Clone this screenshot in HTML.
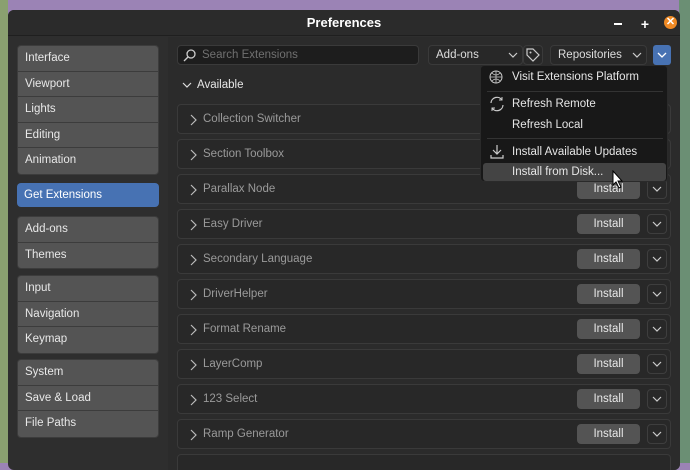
<!DOCTYPE html>
<html><head><style>
*{box-sizing:border-box;margin:0;padding:0}
body{width:690px;height:463px;overflow:hidden;background:#9b83b5;font-family:"Liberation Sans",sans-serif;font-size:11.5px;color:#e6e6e6;position:relative}
.bgg{position:absolute;left:0;top:0;width:8px;height:463px;background:#8aa070}
.bgr{position:absolute;right:0;top:0;width:11px;height:463px;background:#6b8f74}
.win{position:absolute;left:8px;top:10px;width:672px;height:460px;background:#2e2e2e;border-radius:6px;overflow:hidden}
.title{height:26px;background:#2b2b2b;border-bottom:1px solid #1f1f1f;text-align:center;line-height:26px;font-size:13px;font-weight:bold;color:#fff}
.side{position:absolute;left:9px;width:142px;background:#545454;border-radius:4px;border:1px solid #3c3c3c}
.side div{height:25.6px;line-height:25px;padding-left:7px;border-bottom:1px solid #3c3c3c;color:#e8e8e8}
.side div:last-child{border-bottom:none}
.sel{position:absolute;left:9px;top:173px;width:142px;height:24px;background:#4772b3;border-radius:4px;line-height:24px;padding-left:7px;color:#fff}
.main{position:absolute;left:160px;top:27px;width:512px;height:440px;background:#2b2b2b}
.abs{position:absolute}
.field{position:absolute;background:#1d1d1d;border:1px solid #3a3a3a;border-radius:4px;height:20px;line-height:18px}
.row{position:absolute;left:9px;width:494px;height:30px;border:1px solid #3a3a3a;border-radius:4px;background:#282828}
.row .n{position:absolute;left:25px;top:8px;color:#9a9a9a}
.row .c{position:absolute;left:11px;top:9px}
.ib{position:absolute;left:399px;top:4px;width:63px;height:20px;background:#545454;border-radius:4px;text-align:center;line-height:20px;color:#e8e8e8}
.db{position:absolute;left:469px;top:4px;width:20px;height:20px;border:1px solid #3e3e3e;border-radius:4px;background:#282828}
.menu{position:absolute;left:480px;top:65px;width:188px;height:117px;background:#181818;border-radius:4px;border:1px solid #2a2a2a}
.mi{position:absolute;left:31px;color:#e6e6e6}
.sep{position:absolute;left:6px;width:176px;height:1px;background:#333}
</style></head><body>
<div class="bgg"></div><div class="bgr"></div>
<svg width="0" height="0" style="position:absolute"><defs>
<symbol id="r" viewBox="0 0 8 12"><path d="M2 1l5 5-5 5" fill="none" stroke="#bbb" stroke-width="1.2"/></symbol>
<symbol id="d" viewBox="0 0 18 18"><path d="M5 7l4 4 4-4" fill="none" stroke="#ccc" stroke-width="1.2"/></symbol>
</defs></svg>
<div class="win">
<div class="title">Preferences</div>
<div class="abs" style="right:58px;top:13px;width:8px;height:2px;background:#fff"></div>
<div class="abs" style="right:31px;top:6px;color:#fff;font-weight:bold;font-size:14px">+</div>
<div class="abs" style="right:3px;top:6px;width:13px;height:13px;border-radius:50%;background:#f08a24;color:#fff;font-size:11px;line-height:13px;text-align:center;font-weight:bold">✕</div>
<div class="side" style="top:35px"><div>Interface</div><div>Viewport</div><div>Lights</div><div>Editing</div><div>Animation</div></div>
<div class="sel">Get Extensions</div>
<div class="side" style="top:206px"><div>Add-ons</div><div>Themes</div></div>
<div class="side" style="top:265px"><div>Input</div><div>Navigation</div><div>Keymap</div></div>
<div class="side" style="top:349px"><div>System</div><div>Save &amp; Load</div><div>File Paths</div></div>
<div class="main">
<div class="field" style="left:9px;top:8px;width:242px;color:#707070;padding-left:24px">Search Extensions
<svg class="abs" style="left:5px;top:3px" width="13" height="13" viewBox="0 0 13 13"><circle cx="8" cy="5" r="4" fill="none" stroke="#ccc" stroke-width="1.3"/><path d="M5 8L1 12" stroke="#ccc" stroke-width="1.3"/></svg></div>
<div class="field" style="left:260px;top:8px;width:95px;padding-left:7px;color:#ddd;background:#282828">Add-ons<svg class="abs" style="right:0;top:0" width="18" height="18"><use href="#d"/></svg></div>
<div class="field" style="left:355px;top:8px;width:20px;background:#282828"><svg width="18" height="18" viewBox="0 0 18 18"><path d="M3 3h6l6 6-6 6-6-6z" fill="none" stroke="#ccc" stroke-width="1.2"/><circle cx="6.5" cy="6.5" r="1" fill="#ccc"/></svg></div>
<div class="field" style="left:382px;top:8px;width:97px;padding-left:7px;color:#ddd;background:#282828">Repositories<svg class="abs" style="right:0;top:0" width="18" height="18"><use href="#d"/></svg></div>
<div class="abs" style="left:485px;top:8px;width:18px;height:20px;background:#4772b3;border-radius:3px"><svg width="18" height="20"><path d="M5 8l4 4 4-4" fill="none" stroke="#fff" stroke-width="1.3"/></svg></div>
<svg class="abs" style="left:14px;top:44px" width="10" height="8"><path d="M1 2l4 4 4-4" fill="none" stroke="#ddd" stroke-width="1.2"/></svg>
<div class="abs" style="left:29px;top:42px;color:#e6e6e6">Available</div>
</div>
<div class="main" style="background:none;top:0">
<div class="row" style="top:94px"><svg class="c" width="8" height="12"><use href="#r"/></svg><span class="n">Collection Switcher</span></div>
<div class="row" style="top:129px"><svg class="c" width="8" height="12"><use href="#r"/></svg><span class="n">Section Toolbox</span></div>
<div class="row" style="top:164px"><svg class="c" width="8" height="12"><use href="#r"/></svg><span class="n">Parallax Node</span><div class="ib">Install</div><div class="db"><svg width="18" height="18"><use href="#d"/></svg></div></div>
<div class="row" style="top:199px"><svg class="c" width="8" height="12"><use href="#r"/></svg><span class="n">Easy Driver</span><div class="ib">Install</div><div class="db"><svg width="18" height="18"><use href="#d"/></svg></div></div>
<div class="row" style="top:234px"><svg class="c" width="8" height="12"><use href="#r"/></svg><span class="n">Secondary Language</span><div class="ib">Install</div><div class="db"><svg width="18" height="18"><use href="#d"/></svg></div></div>
<div class="row" style="top:269px"><svg class="c" width="8" height="12"><use href="#r"/></svg><span class="n">DriverHelper</span><div class="ib">Install</div><div class="db"><svg width="18" height="18"><use href="#d"/></svg></div></div>
<div class="row" style="top:304px"><svg class="c" width="8" height="12"><use href="#r"/></svg><span class="n">Format Rename</span><div class="ib">Install</div><div class="db"><svg width="18" height="18"><use href="#d"/></svg></div></div>
<div class="row" style="top:339px"><svg class="c" width="8" height="12"><use href="#r"/></svg><span class="n">LayerComp</span><div class="ib">Install</div><div class="db"><svg width="18" height="18"><use href="#d"/></svg></div></div>
<div class="row" style="top:374px"><svg class="c" width="8" height="12"><use href="#r"/></svg><span class="n">123 Select</span><div class="ib">Install</div><div class="db"><svg width="18" height="18"><use href="#d"/></svg></div></div>
<div class="row" style="top:409px"><svg class="c" width="8" height="12"><use href="#r"/></svg><span class="n">Ramp Generator</span><div class="ib">Install</div><div class="db"><svg width="18" height="18"><use href="#d"/></svg></div></div>
<div class="row" style="top:444px"></div>
</div>
</div>
<div class="menu">
<div class="sep" style="top:25px"></div><div class="sep" style="top:72px"></div>
<div class="abs" style="left:2px;top:97px;width:183px;height:18px;background:#444;border-radius:3px"></div>
<svg class="abs" style="left:8px;top:4px" width="16" height="16"><circle cx="7" cy="7" r="6" fill="none" stroke="#ccc"/><path d="M1 7h12M7 1v12M3 3q4 4 8 0M3 11q4-4 8 0" fill="none" stroke="#ccc" stroke-width=".8"/></svg>
<svg class="abs" style="left:8px;top:30px" width="16" height="16"><path d="M2 7a6 6 0 0 1 11-3M14 9a6 6 0 0 1-11 3" fill="none" stroke="#ccc" stroke-width="1.2"/><path d="M13 1v3h-3M3 15v-3h3" fill="none" stroke="#ccc"/></svg>
<svg class="abs" style="left:8px;top:78px" width="16" height="16"><path d="M8 1v9M4 6l4 4 4-4M2 11v3h12v-3" fill="none" stroke="#ccc" stroke-width="1.2"/></svg>
<div class="mi" style="top:5px">Visit Extensions Platform</div>
<div class="mi" style="top:32px">Refresh Remote</div>
<div class="mi" style="top:53px">Refresh Local</div>
<div class="mi" style="top:80px">Install Available Updates</div>
<div class="mi" style="top:100px">Install from Disk...</div>
</div>
<svg class="abs" style="left:612px;top:170px" width="14" height="20"><path d="M1 1v14l3-3 3 6 2-1-3-6h4z" fill="#fff" stroke="#000"/></svg>
</body></html>
